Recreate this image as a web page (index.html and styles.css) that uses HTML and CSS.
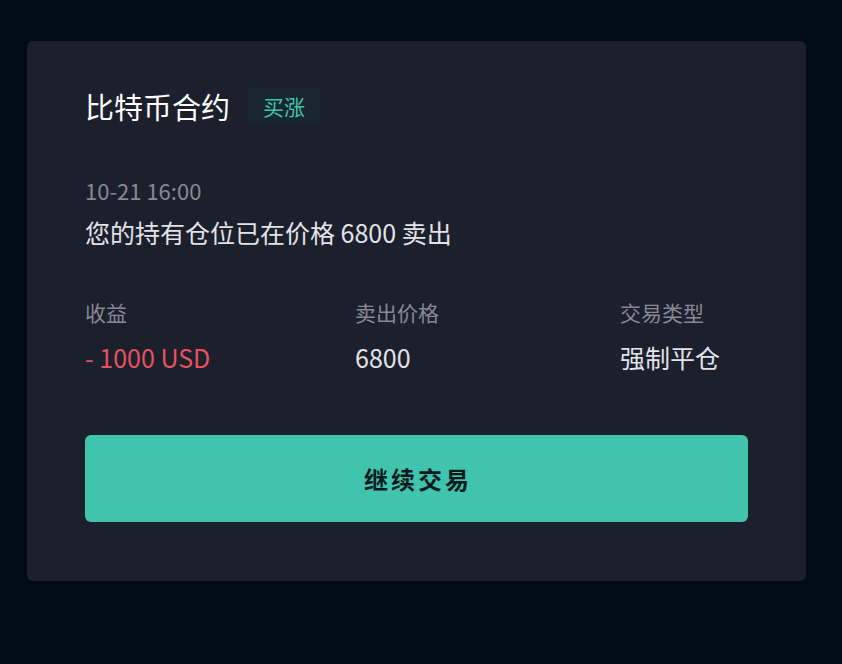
FILE: index.html
```html
<!DOCTYPE html>
<html lang="zh-CN">
<head>
<meta charset="utf-8">
<title>比特币合约</title>
<link rel="stylesheet" href="styles.css">
</head>
<body>
<div class="card">
  <div class="header">
    <span class="title">比特币合约</span>
    <span class="tag">买涨</span>
  </div>
  <div class="time">10-21 16:00</div>
  <div class="message">您的持有仓位已在价格 6800 卖出</div>
  <div class="stats">
    <div class="stat">
      <div class="label">收益</div>
      <div class="value loss">- 1000 USD</div>
    </div>
    <div class="stat">
      <div class="label">卖出价格</div>
      <div class="value">6800</div>
    </div>
    <div class="stat">
      <div class="label">交易类型</div>
      <div class="value">强制平仓</div>
    </div>
  </div>
  <button class="btn">继续交易</button>
</div>
</body>
</html>
```
FILE: styles.css
```css
html, body {
  margin: 0;
  padding: 0;
  background: #010b17;
}
body {
  padding: 41px 0 0 27px;
  font-family: "Noto Sans CJK SC", "Noto Sans", sans-serif;
}
.card {
  box-sizing: border-box;
  width: 779px;
  height: 540px;
  background: #1c1f2c;
  border-radius: 6px;
  padding: 47px 58px 0;
}
.header {
  display: flex;
  align-items: center;
  gap: 18px;
  height: 36px;
}
.title {
  font-size: 29px;
  line-height: 36px;
  font-weight: 400;
  color: #ffffff;
}
.tag {
  padding: 0 15px;
  font-size: 21px;
  line-height: 36px;
  color: #3fc4ac;
  background: #19262f;
  border-radius: 3px;
}
.time {
  margin-top: 52px;
  font-size: 22px;
  line-height: 28px;
  color: #868994;
}
.message {
  margin-top: 11px;
  font-size: 25px;
  line-height: 34px;
  color: #e2e3e7;
}
.stats {
  display: grid;
  grid-template-columns: 270px 265px 1fr;
  margin-top: 49px;
}
.label {
  font-size: 21px;
  line-height: 28px;
  color: #868994;
}
.value {
  margin-top: 14px;
  font-size: 25px;
  line-height: 34px;
  color: #e2e3e7;
}
.value.loss {
  color: #e5535e;
}
.btn {
  display: block;
  width: 100%;
  height: 87px;
  margin-top: 61px;
  border: none;
  border-radius: 6px;
  background: #40c4ad;
  color: #0a1a1f;
  font-family: inherit;
  font-size: 24px;
  font-weight: 700;
  letter-spacing: 3px;
  padding: 0 0 0 3px;
  cursor: pointer;
}
```
